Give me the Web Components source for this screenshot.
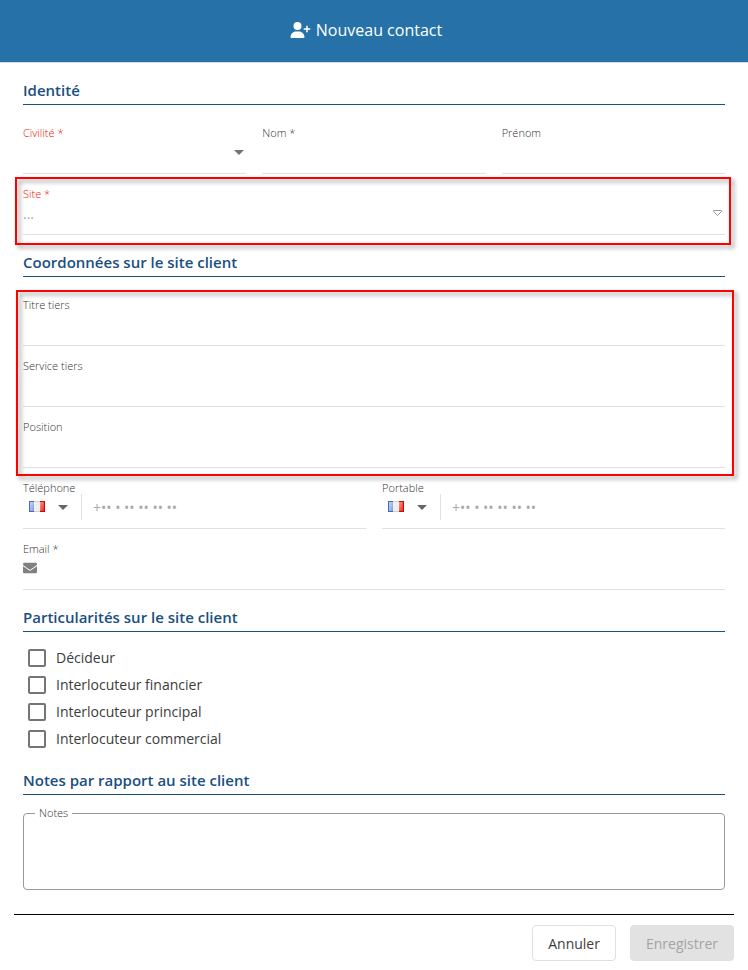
<!DOCTYPE html>
<html lang="fr">
<head>
<meta charset="utf-8">
<meta name="viewport" content="width=device-width, initial-scale=1">
<title>Nouveau contact</title>
<style>
    body {
        margin: 0;
        background: #fff;
        color: #3c3c3c;
        font-family: "Open Sans", "Noto Sans", sans-serif;
        font-size: 14px;
    }
</style>
</head>
<body>
<contact-dialog></contact-dialog>

<script>
const caret = `<svg class="caret" width="10" height="5" viewBox="0 0 10 5" aria-hidden="true"><path d="M0 0h10L5 5z" fill="currentColor"/></svg>`;

const fieldStyle = `
    :host { display: block; min-width: 0; color: #757575; }
    * { box-sizing: border-box; }
    .field { padding: 13px 0 9px; border-bottom: 1px solid #e0e0e0; }
    label, .label { display: block; font-size: 11px; line-height: 14px; font-weight: 300; color: #333; }
    :host([invalid]) label { color: #f01000; }
    .control { display: flex; align-items: center; height: 24px; }
    input, select {
        flex: 1;
        min-width: 0;
        width: 100%;
        height: 24px;
        margin: 0;
        padding: 0;
        border: 0;
        outline: 0;
        background: none;
        font: inherit;
        color: #444;
        appearance: none;
    }
    input::placeholder { color: #aaa; opacity: 1; }
`;

class SectionTitle extends HTMLElement {
    constructor() {
        super();
        this.attachShadow({ mode: 'open' });
    }

    connectedCallback() {
        this.shadowRoot.innerHTML = `
        <style>
            :host { display: block; }
            h2 {
                margin: 0;
                padding: 17px 0 4px;
                border-bottom: 1px solid #1a4f80;
                color: #1a4f80;
                font-size: 15px;
                line-height: 20px;
                font-weight: 600;
            }
        </style>
        <h2><slot></slot></h2>
        `;
    }
}
customElements.define('section-title', SectionTitle);

class TextField extends HTMLElement {
    constructor() {
        super();
        this.attachShadow({ mode: 'open' });
    }

    connectedCallback() {
        this.shadowRoot.innerHTML = `
        <style>${fieldStyle}</style>
        <div class="field">
            <label for="champ">${this.getAttribute('label')}</label>
            <div class="control">
                <slot name="before"></slot>
                <input id="champ" type="${this.getAttribute('type') || 'text'}" placeholder="${this.getAttribute('placeholder') || ''}">
                <slot name="after"></slot>
            </div>
        </div>
        `;
    }
}
customElements.define('text-field', TextField);

class SelectField extends HTMLElement {
    constructor() {
        super();
        this.attachShadow({ mode: 'open' });
    }

    connectedCallback() {
        this.shadowRoot.innerHTML = `
        <style>
            ${fieldStyle}
            .control { display: grid; }
            select, .caret { grid-area: 1 / 1; }
            .caret { justify-self: end; margin-right: 2px; pointer-events: none; }
        </style>
        <div class="field">
            <label for="champ">${this.getAttribute('label')}</label>
            <div class="control">
                <select id="champ"><option value=""></option></select>
                ${caret}
            </div>
        </div>
        `;
    }
}
customElements.define('select-field', SelectField);

class PhoneField extends HTMLElement {
    constructor() {
        super();
        this.attachShadow({ mode: 'open' });
    }

    connectedCallback() {
        this.shadowRoot.innerHTML = `
        <style>
            ${fieldStyle}
            button {
                display: flex;
                align-items: center;
                gap: 13px;
                height: 26px;
                padding: 0 13px 0 6px;
                border: 0;
                border-right: 1px solid #e0e0e0;
                background: none;
                color: #666;
            }
            input { margin-left: 11px; }
        </style>
        <div class="field">
            <label for="champ">${this.getAttribute('label')}</label>
            <div class="control">
                <button type="button" aria-label="France">
                    <svg width="16" height="12" viewBox="0 0 16 12" aria-hidden="true">
                        <defs>
                            <linearGradient id="bleu" x2="1" y2="1"><stop stop-color="#c8d8f4"/><stop offset="1" stop-color="#7d9cdc"/></linearGradient>
                            <linearGradient id="rouge" x2="1" y2="1"><stop stop-color="#ff9a8c"/><stop offset="1" stop-color="#e03020"/></linearGradient>
                        </defs>
                        <path d="M0 0h5v11H0z" fill="#4468b8"/>
                        <path d="M1 1h4v9H1z" fill="url(#bleu)"/>
                        <path d="M5 0h6v11H5z" fill="#d2d2d2"/>
                        <path d="M5 1h6v9H5z" fill="#efefef"/>
                        <path d="M11 0h5v11h-5z" fill="#cc0808"/>
                        <path d="M11 1h4v9h-4z" fill="url(#rouge)"/>
                    </svg>
                    ${caret}
                </button>
                <input id="champ" type="tel" placeholder="+•• • •• •• •• ••">
            </div>
        </div>
        `;
    }
}
customElements.define('phone-field', PhoneField);

class CheckItem extends HTMLElement {
    constructor() {
        super();
        this.attachShadow({ mode: 'open' });
    }

    connectedCallback() {
        this.shadowRoot.innerHTML = `
        <style>
            :host { display: block; }
            label { display: flex; align-items: center; gap: 10px; height: 27px; padding-left: 5px; }
            input {
                appearance: none;
                box-sizing: border-box;
                width: 18px;
                height: 18px;
                margin: 0;
                border: 2px solid #757575;
                border-radius: 2px;
            }
            input:checked { background: #2672a8; }
        </style>
        <label><input type="checkbox"><span><slot></slot></span></label>
        `;
    }
}
customElements.define('check-item', CheckItem);

class NotesField extends HTMLElement {
    constructor() {
        super();
        this.attachShadow({ mode: 'open' });
    }

    connectedCallback() {
        this.shadowRoot.innerHTML = `
        <style>
            :host { display: block; }
            fieldset {
                margin: 0;
                padding: 0 11px;
                border: 1px solid #999;
                border-radius: 4px;
                min-width: 0;
            }
            legend { padding: 0 4px; font-size: 11px; line-height: 14px; font-weight: 300; color: #333; }
            textarea {
                display: block;
                box-sizing: border-box;
                width: 100%;
                height: 69px;
                padding: 4px;
                border: 0;
                outline: 0;
                resize: none;
                background: none;
                font: inherit;
            }
        </style>
        <fieldset>
            <legend><label for="notes">${this.getAttribute('label')}</label></legend>
            <textarea id="notes"></textarea>
        </fieldset>
        `;
    }
}
customElements.define('notes-field', NotesField);

// Red annotation frame drawn over the fields it wraps
class MarkedZone extends HTMLElement {
    constructor() {
        super();
        this.attachShadow({ mode: 'open' });
    }

    connectedCallback() {
        this.shadowRoot.innerHTML = `
        <style>
            :host { display: block; position: relative; }
            .frame {
                position: absolute;
                inset: var(--frame, 4px -8px -8px);
                border: 2px solid #f00;
                filter: drop-shadow(3px 3px 2px rgba(0,0,0,0.4));
                pointer-events: none;
            }
        </style>
        <slot></slot>
        <div class="frame"></div>
        `;
    }
}
customElements.define('marked-zone', MarkedZone);

class ActionButton extends HTMLElement {
    constructor() {
        super();
        this.attachShadow({ mode: 'open' });
    }

    connectedCallback() {
        this.shadowRoot.innerHTML = `
        <style>
            :host { display: block; }
            button {
                display: block;
                height: 36px;
                padding: 0 15px;
                border: 1px solid #e0e0e0;
                border-radius: 4px;
                background: #fff;
                color: #3c3c3c;
                font: inherit;
            }
            button:disabled { background: #e2e2e2; color: #a4a4a4; }
        </style>
        <button type="button" ${this.hasAttribute('disabled') ? 'disabled' : ''}><slot></slot></button>
        `;
    }
}
customElements.define('action-button', ActionButton);

class ContactDialog extends HTMLElement {
    constructor() {
        super();
        this.attachShadow({ mode: 'open' });
    }

    connectedCallback() {
        this.shadowRoot.innerHTML = `
        <style>
            :host { display: block; }
            header {
                display: flex;
                align-items: center;
                justify-content: center;
                gap: 5px;
                padding: 18px 16px 20px 0;
                border-bottom: 1px solid #d4dbe2;
                background: #2672a8;
                color: #fff;
            }
            h1 { margin: 0; font-size: 16px; line-height: 24px; font-weight: 400; }
            form { padding: 0 23px; }
            .fields { padding-top: 8px; }
            .row { display: grid; grid-auto-flow: column; grid-auto-columns: minmax(0, 1fr); gap: 16px; }
            .checks { padding-top: 12px; padding-bottom: 1px; }
            .notes { padding-top: 11px; }
            .site { --frame: 3px -6px -10px -8px; }
            .tiers { --frame: 5px -9px -8px -7px; }
            .open { margin-right: 2px; }
            footer {
                display: flex;
                justify-content: flex-end;
                gap: 14px;
                margin: 24px 14px 0;
                padding: 10px 0 8px;
                border-top: 1px solid #000;
            }
        </style>
        <header>
            <svg width="21" height="16" viewBox="0 0 640 512" fill="currentColor" aria-hidden="true"><path d="M96 128a128 128 0 1 1 256 0A128 128 0 1 1 96 128zM0 482.3C0 383.8 79.8 304 178.3 304h91.4C368.2 304 448 383.8 448 482.3c0 16.4-13.3 29.7-29.7 29.7H29.7C13.3 512 0 498.7 0 482.3zM504 312V248H440c-13.3 0-24-10.7-24-24s10.7-24 24-24h64V136c0-13.3 10.7-24 24-24s24 10.7 24 24v64h64c13.3 0 24 10.7 24 24s-10.7 24-24 24H552v64c0 13.3-10.7 24-24 24s-24-10.7-24-24z"/></svg>
            <h1>Nouveau contact</h1>
        </header>
        <form>
            <section-title>Identité</section-title>
            <div class="fields">
                <div class="row">
                    <select-field label="Civilité *" invalid></select-field>
                    <text-field label="Nom *"></text-field>
                    <text-field label="Prénom"></text-field>
                </div>
                <marked-zone class="site">
                    <text-field label="Site *" placeholder="..." invalid>
                        <svg slot="after" class="open" width="10" height="6" viewBox="0 0 10 6" aria-hidden="true"><path d="M.5.5h8v1l-4 4-4-4z" fill="none" stroke="#999"/></svg>
                    </text-field>
                </marked-zone>
            </div>

            <section-title>Coordonnées sur le site client</section-title>
            <div class="fields">
                <marked-zone class="tiers">
                    <text-field label="Titre tiers"></text-field>
                    <text-field label="Service tiers"></text-field>
                    <text-field label="Position"></text-field>
                </marked-zone>
                <div class="row">
                    <phone-field label="Téléphone"></phone-field>
                    <phone-field label="Portable"></phone-field>
                </div>
                <text-field label="Email *" type="email">
                    <svg slot="before" width="14" height="14" viewBox="0 0 512 512" fill="#808080" aria-hidden="true"><path d="M502.3 190.8c3.9-3.1 9.7-.2 9.7 4.7V400c0 26.5-21.5 48-48 48H48c-26.5 0-48-21.5-48-48V195.6c0-5 5.7-7.8 9.7-4.7 22.4 17.4 52.1 39.5 154.1 113.6 21.1 15.4 56.7 47.8 92.2 47.6 35.7.3 72-32.8 92.3-47.6 102-74.1 131.6-96.3 154-113.7zM256 320c23.2.4 56.6-29.2 73.4-41.4 132.7-96.3 142.8-104.7 173.4-128.7 5.8-4.5 9.2-11.5 9.2-18.9v-19c0-26.5-21.5-48-48-48H48c-26.5 0-48 21.5-48 48v19c0 7.4 3.4 14.3 9.2 18.9 30.6 23.9 40.7 32.4 173.4 128.7 16.8 12.2 50.2 41.8 73.4 41.4z"/></svg>
                </text-field>
            </div>

            <section-title>Particularités sur le site client</section-title>
            <div class="checks">
                <check-item>Décideur</check-item>
                <check-item>Interlocuteur financier</check-item>
                <check-item>Interlocuteur principal</check-item>
                <check-item>Interlocuteur commercial</check-item>
            </div>

            <section-title>Notes par rapport au site client</section-title>
            <div class="notes">
                <notes-field label="Notes"></notes-field>
            </div>
        </form>
        <footer>
            <action-button>Annuler</action-button>
            <action-button disabled>Enregistrer</action-button>
        </footer>
        `;
    }
}
customElements.define('contact-dialog', ContactDialog);
</script>
</body>
</html>
